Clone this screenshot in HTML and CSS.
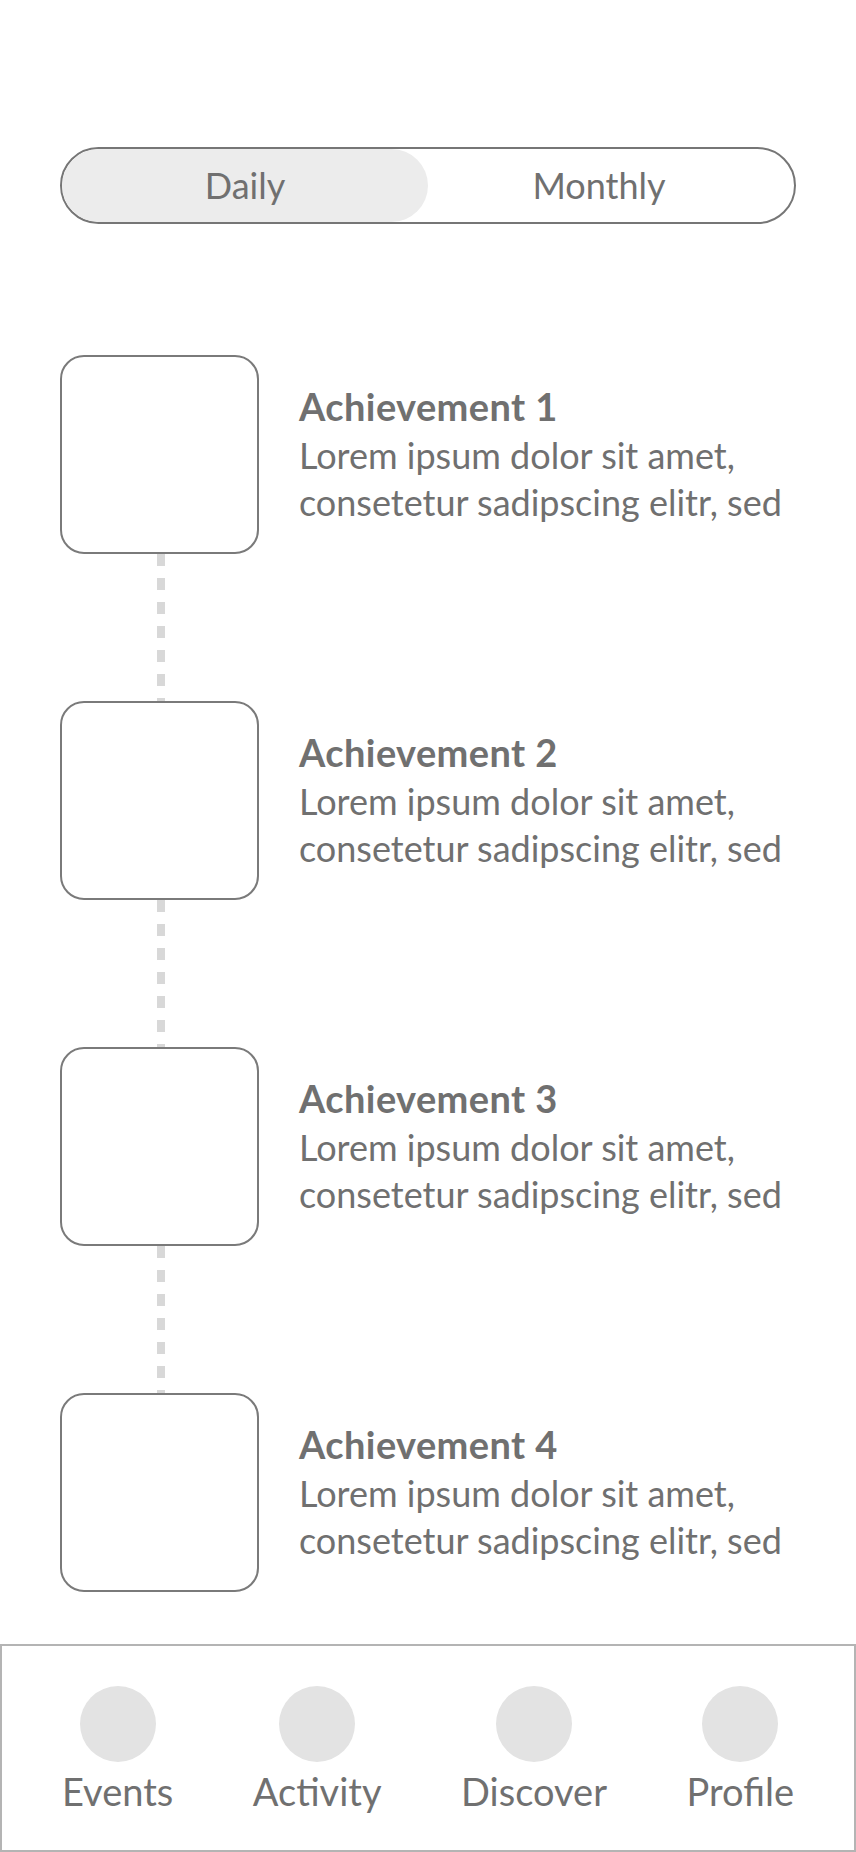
FILE: index.html
```html
<!DOCTYPE html>
<html lang="en">
<head>
    <meta charset="UTF-8">
    <meta name="viewport" content="width=device-width, initial-scale=1.0">
    <title>Achievements</title>
    <link rel="stylesheet" href="styles.css">
</head>
<body>
    <div class="screen">
        <div class="toggle">
            <div class="segment active">Daily</div>
            <div class="segment">Monthly</div>
        </div>

        <div class="timeline">
            <div class="achievement">
                <div class="badge"></div>
                <div class="info">
                    <h3 class="title">Achievement 1</h3>
                    <p class="text">Lorem ipsum dolor sit amet,<br>consetetur sadipscing elitr, sed</p>
                </div>
            </div>
            <div class="link"></div>
            <div class="achievement">
                <div class="badge"></div>
                <div class="info">
                    <h3 class="title">Achievement 2</h3>
                    <p class="text">Lorem ipsum dolor sit amet,<br>consetetur sadipscing elitr, sed</p>
                </div>
            </div>
            <div class="link"></div>
            <div class="achievement">
                <div class="badge"></div>
                <div class="info">
                    <h3 class="title">Achievement 3</h3>
                    <p class="text">Lorem ipsum dolor sit amet,<br>consetetur sadipscing elitr, sed</p>
                </div>
            </div>
            <div class="link"></div>
            <div class="achievement">
                <div class="badge"></div>
                <div class="info">
                    <h3 class="title">Achievement 4</h3>
                    <p class="text">Lorem ipsum dolor sit amet,<br>consetetur sadipscing elitr, sed</p>
                </div>
            </div>
        </div>

        <nav class="tabbar">
            <div class="tab"><span class="tab-icon"></span><span class="tab-label">Events</span></div>
            <div class="tab"><span class="tab-icon"></span><span class="tab-label">Activity</span></div>
            <div class="tab"><span class="tab-icon"></span><span class="tab-label">Discover</span></div>
            <div class="tab"><span class="tab-icon"></span><span class="tab-label">Profile</span></div>
        </nav>
    </div>
</body>
</html>
```

FILE: styles.css
```css
* {
    margin: 0;
    padding: 0;
    box-sizing: border-box;
}

body {
    background-color: #ffffff;
    font-family: "Segoe UI", Lato, "Noto Sans", sans-serif;
    color: #707070;
}

.screen {
    display: flex;
    flex-direction: column;
    min-height: 100vh;
}

/* daily / monthly switch */
.toggle {
    display: flex;
    height: 77px;
    margin: 147px 60px 0;
    border: 2px solid #767676;
    border-radius: 40px;
    overflow: hidden;
}

.segment {
    width: 50%;
    display: flex;
    justify-content: center;
    align-items: center;
    font-size: 36px;
    padding-bottom: 2px;
}

.segment + .segment {
    padding-right: 24px;
}

.segment.active {
    background-color: #ececec;
    border-radius: 38px;
}

/* achievements list */
.timeline {
    display: flex;
    flex-direction: column;
    margin-top: 131px;
    padding: 0 60px;
}

.achievement {
    display: flex;
    align-items: center;
    gap: 40px;
}

.badge {
    width: 199px;
    height: 199px;
    flex-shrink: 0;
    border: 2px solid #7a7a7a;
    border-radius: 24px;
    background-color: #ffffff;
}

.info {
    padding-bottom: 2px;
}

.title {
    font-size: 38px;
    font-weight: 700;
    line-height: 51px;
    letter-spacing: 0.4px;
}

.text {
    font-size: 36px;
    line-height: 47px;
}

.link {
    width: 8px;
    height: 147px;
    margin-left: 97px;
    background: repeating-linear-gradient(to bottom, #d8d8d8 0, #d8d8d8 12px, transparent 12px, transparent 24px);
}

/* bottom navigation */
.tabbar {
    display: flex;
    justify-content: space-between;
    margin-top: auto;
    height: 208px;
    padding: 40px 60px 0;
    border: 2px solid #b4b4b4;
}

.tab {
    display: flex;
    flex-direction: column;
    align-items: center;
    gap: 6px;
}

.tab-icon {
    width: 76px;
    height: 76px;
    border-radius: 50%;
    background-color: #e3e3e3;
}

.tab-label {
    font-size: 38px;
    line-height: 46px;
}
```
